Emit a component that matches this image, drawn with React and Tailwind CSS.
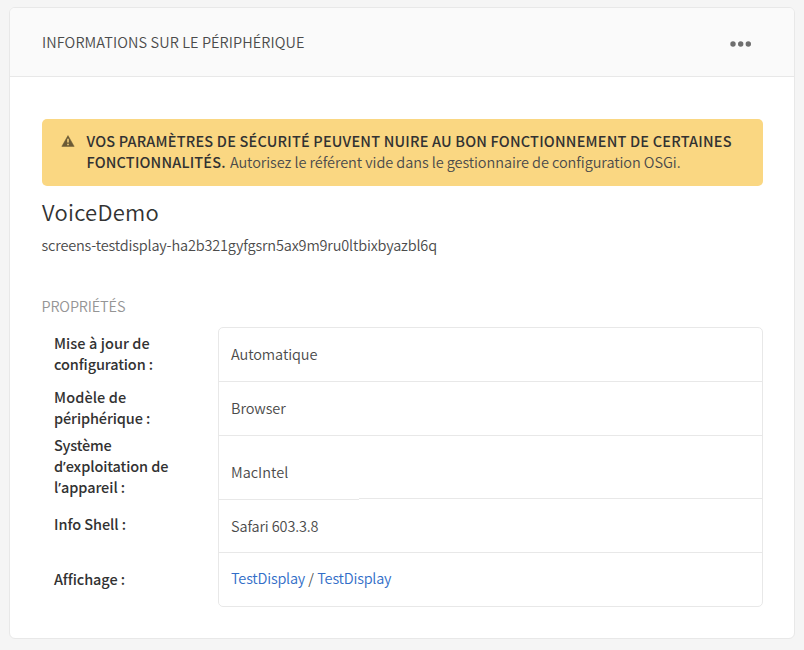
const labels = [
  { box: "h-[54px] pt-[5px]", lines: [["Mise à jour de", "tracking-[0.06px]"], ["configuration :", "tracking-[-0.12px]"]] },
  { box: "h-[54px] pt-[5px]", lines: [["Modèle de", "tracking-[0.1px]"], ["périphérique :", "tracking-[-0.12px]"]] },
  { box: "h-[63px] -mt-px", lines: [["Système", "tracking-[-0.2px]"], ["d’exploitation de", "tracking-[-0.1px]"], ["l’appareil :", "tracking-[-0.06px]"]] },
  { box: "h-[55px] pt-4", lines: [["Info Shell :", "tracking-[-0.06px]"]] },
  { box: "h-[54px] pt-4", lines: [["Affichage :", "tracking-[-0.08px]"]] },
];

// The CJK family draws a full-width apostrophe, so it is set in a Latin face.
function Line({ text, className = "" }) {
  const parts = text.split("’");
  return (
    <span className={`whitespace-pre ${className}`}>
      {parts[0]}
      {parts.length > 1 && <span className="font-['Noto_Sans',sans-serif]">’</span>}
      {parts[1]}
    </span>
  );
}

function Value({ className, children }) {
  return <dd className={`border-b border-[#e8e8e8] px-3 ${className}`}>{children}</dd>;
}

function DisplayLink() {
  return (
    <a className="text-[#326ec8]">
      <Line text="TestDisplay" className="tracking-[-0.2px]" />
    </a>
  );
}

export default function App() {
  return (
    <div className="h-[650px] w-[804px] overflow-hidden bg-[#f5f5f5] pl-[9px] pt-[7px] font-[350] text-[14.5px] leading-[21px] text-[#4b4b4b] font-['Noto_Sans_CJK_SC',sans-serif]">
      <section className="h-[632px] w-[786px] overflow-hidden rounded-md border border-[#e8e8e8] bg-white">
        <header className="flex h-[69px] items-center justify-between border-b border-[#e8e8e8] bg-[#fafafa] pl-8 pr-[42px]">
          <h1 className="pb-0.5">
            <Line text="INFORMATIONS SUR LE PÉRIPHÉRIQUE" className="tracking-[0.09px]" />
          </h1>
          <button aria-label="Plus" className="mt-[3px]">
            <svg width="22" height="6" viewBox="0 0 22 6" fill="#6e6e6e">
              <circle cx="3" cy="3" r="2.7" />
              <circle cx="10.7" cy="3" r="2.7" />
              <circle cx="18.3" cy="3" r="2.7" />
            </svg>
          </button>
        </header>

        <div className="pl-8 pt-[42px]">
          <div className="flex h-[67px] w-[721px] rounded-[5px] bg-[#fad782] pl-[19px] pt-[11px]">
            <svg className="mt-[5px] shrink-0" width="14" height="12" viewBox="0 0 14 12">
              <path d="M7 0.6 13.2 11.4H0.8Z" fill="#6b5a35" stroke="#6b5a35" strokeWidth="0.5" strokeLinejoin="round" />
              <path d="M7 3.8v3.7M7 8.7v1.6" stroke="#fad782" strokeWidth="1.5" />
            </svg>
            <p className="ml-[11.5px] whitespace-nowrap">
              <strong className="font-medium text-[#323232]">
                <Line
                  text="VOS PARAMÈTRES DE SÉCURITÉ PEUVENT NUIRE AU BON FONCTIONNEMENT DE CERTAINES"
                  className="tracking-[0.196px]"
                />
                <br />
                <Line text="FONCTIONNALITÉS." className="mr-px tracking-[0.16px]" />
              </strong>{" "}
              <Line
                text="Autorisez le référent vide dans le gestionnaire de configuration OSGi."
                className="tracking-[-0.07px]"
              />
            </p>
          </div>

          <h2 className="mt-[10px] text-[22px] leading-[30px] text-[#323232]">
            <Line text="VoiceDemo" className="tracking-[0.28px]" />
          </h2>
          <p className="-ml-[0.5px] mt-2">
            <Line text="screens-testdisplay-ha2b321gyfgsrn5ax9m9ru0ltbixbyazbl6q" className="tracking-[-0.16px]" />
          </p>
          <h3 className="-ml-[0.5px] mt-10 text-[#959595]">
            <Line text="PROPRIÉTÉS" className="tracking-[-0.15px]" />
          </h3>

          <div className="mt-[11px] flex">
            <div className="w-[176px] shrink-0 pl-3 font-medium text-[#323232]">
              {labels.map((label) => (
                <div key={label.lines[0][0]} className={`flex flex-col items-start ${label.box}`}>
                  {label.lines.map(([text, tracking]) => (
                    <Line key={text} text={text} className={`h-[21px] ${tracking}`} />
                  ))}
                </div>
              ))}
            </div>
            <dl className="h-[280px] w-[545px] shrink-0 overflow-hidden rounded-[5px] border border-[#e8e8e8]">
              <Value className="h-[54px] pt-[15px]">
                <Line text="Automatique" className="tracking-[-0.09px]" />
              </Value>
              <Value className="h-[54px] pt-[15px]">
                <Line text="Browser" className="tracking-[-0.07px]" />
              </Value>
              <dd className="h-[62px] px-3 pt-[25px]">
                <Line text="MacIntel" />
              </dd>
              <div className="flex h-[2px]">
                <div className="w-[140px] border-b border-[#e8e8e8]" />
                <div className="grow border-t border-[#e8e8e8]" />
              </div>
              <Value className="h-[53px] pt-[15px]">
                <Line text="Safari 603.3.8" className="tracking-[-0.13px]" />
              </Value>
              <dd className="h-[53px] px-3 pt-[14px]">
                <DisplayLink />
                {" / "}
                <DisplayLink />
              </dd>
            </dl>
          </div>
        </div>
      </section>
    </div>
  );
}
